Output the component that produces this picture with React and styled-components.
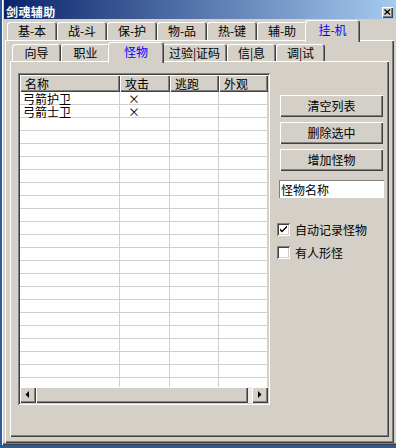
import React from 'react';
import styled, { createGlobalStyle } from 'styled-components';

const FACE = '#d4d0c8';
const raised = `box-shadow: inset 1px 1px #ffffff, inset -1px -1px #404040, inset -2px -2px #808080;`;
const sunken = `box-shadow: inset 1px 1px #808080, inset -1px -1px #ffffff, inset 2px 2px #404040, inset -2px -2px ${FACE};`;

const GlobalStyle = createGlobalStyle`
  html, body { margin: 0; padding: 0; background: #2d5a9c; }
  body { font-family: "Noto Sans CJK SC", "Noto Sans", sans-serif; font-size: 12px; color: #000; }
  * { box-sizing: border-box; }
`;

const Desktop = styled.div`
  width: 396px;
  height: 448px;
  background: #2d5a9c;
  padding-left: 2px;
  overflow: hidden;
`;

const Frame = styled.div`
  height: 445px;
  background: ${FACE};
  padding: 0 0 2px 2px;
  display: flex;
  flex-direction: column;
  box-shadow: inset 1px 0 #ffffff, inset 0 -1px #404040, inset 0 -2px #808080;
`;

const TitleBar = styled.div`
  height: 19px;
  flex: none;
  display: flex;
  align-items: center;
  padding: 5px 3px 0 2px;
  background: linear-gradient(to right, #0a246a, #a6caf0);
`;

const Title = styled.span`
  color: #ffffff;
  font-weight: 700;
  font-size: 12px;
  line-height: 14px;
  letter-spacing: 0.4px;
`;

const CloseButton = styled.div`
  margin-left: auto;
  width: 11px;
  height: 11px;
  background: ${FACE};
  ${raised}
  display: flex;
  align-items: center;
  justify-content: center;
  padding: 0 1px 1px 0;
`;

const TabRow = styled.div`
  flex: none;
  height: ${p => p.$h}px;
  display: flex;
  align-items: flex-end;
  padding-left: ${p => p.$pl}px;
`;

const Tab = styled.div`
  position: relative;
  z-index: ${p => (p.$active ? 1 : 0)};
  width: ${p => p.$w + (p.$active ? 4 : 0)}px;
  height: ${p => (p.$active ? p.$h + 4 : p.$h)}px;
  margin: 0 ${p => (p.$active ? -2 : 0)}px ${p => (p.$active ? -2 : 0)}px;
  padding-bottom: ${p => (p.$active ? 2 : 0)}px;
  background: ${FACE};
  border-radius: 3px 3px 0 0;
  box-shadow: inset 1px 1px #ffffff, inset -1px 0 #404040, inset -2px 0 #808080;
  display: flex;
  align-items: center;
  justify-content: center;
  color: ${p => (p.$active ? '#0000ff' : '#000000')};
  font-size: 12px;
  line-height: 14px;
  white-space: nowrap;
`;

const Panel = styled.div`
  flex: 1;
  background: ${FACE};
  box-shadow: inset 1px 1px #ffffff, inset -1px -1px #404040, inset -2px -2px #808080;
`;

const OuterPanel = styled(Panel)`
  margin: 0 2px 0 1px;
  padding: 2px 5px 6px 5px;
  display: flex;
  flex-direction: column;
`;

const InnerPanel = styled(Panel)`
  display: flex;
  align-items: flex-start;
  padding: 12px 0 0 8px;
`;

const ListView = styled.div`
  width: 252px;
  height: 332px;
  flex: none;
  padding: 2px;
  background: #ffffff;
  ${sunken}
  display: flex;
  flex-direction: column;
`;

const Header = styled.div`
  height: 17px;
  flex: none;
  display: flex;
  background: ${FACE};
  overflow: hidden;
`;

const HeaderCell = styled.div`
  width: ${p => p.$w}px;
  flex: none;
  height: 17px;
  padding-left: 5px;
  ${raised}
  display: flex;
  align-items: center;
  line-height: 14px;
`;

const Body = styled.div`
  flex: 1;
  overflow: hidden;
  background: #ffffff;
`;

const Row = styled.div`
  height: 13px;
  display: flex;
  box-shadow: inset 0 -1px #d0d0d0;
`;

const Cell = styled.div`
  width: ${p => p.$w}px;
  flex: none;
  height: 13px;
  box-shadow: inset -1px 0 #d0d0d0;
  padding-left: ${p => p.$pl}px;
  font-size: 12px;
  line-height: 13px;
  white-space: nowrap;
`;

const ScrollBar = styled.div`
  height: 16px;
  flex: none;
  display: flex;
  background: #eceae6;
`;

const ScrollButton = styled.div`
  width: 16px;
  height: 16px;
  flex: none;
  background: ${FACE};
  ${raised}
  display: flex;
`;

const Thumb = styled.div`
  width: 212px;
  height: 16px;
  flex: none;
  background: ${FACE};
  ${raised}
`;

const Track = styled.div`
  flex: 1;
`;

const SideColumn = styled.div`
  display: flex;
  flex-direction: column;
  align-items: flex-start;
  margin-left: 10px;
  padding-top: 22px;
`;

const Button = styled.div`
  width: 103px;
  height: 22px;
  margin-bottom: ${p => p.$mb}px;
  background: ${FACE};
  ${raised}
  display: flex;
  align-items: center;
  justify-content: center;
  padding-bottom: 1px;
  line-height: 14px;
`;

const TextBox = styled.div`
  width: 105px;
  height: 18px;
  margin-left: -1px;
  background: #ffffff;
  border-top: 1px solid #808080;
  border-left: 1px solid #808080;
  display: flex;
  align-items: center;
  padding-left: 1px;
  line-height: 14px;
`;

const CheckRow = styled.div`
  display: flex;
  align-items: center;
  margin-left: -3px;
  margin-top: ${p => p.$mt}px;
  height: 13px;
`;

const CheckBox = styled.div`
  width: 13px;
  height: 13px;
  flex: none;
  background: #ffffff;
  ${sunken}
  display: flex;
  align-items: center;
  justify-content: center;
`;

const CheckLabel = styled.span`
  margin-left: 5px;
  line-height: 14px;
`;

const outerTabs = [
  { label: '基-本', w: 50 },
  { label: '战-斗', w: 50 },
  { label: '保-护', w: 50 },
  { label: '物-品', w: 50 },
  { label: '热-键', w: 50 },
  { label: '辅-助', w: 50 },
  { label: '挂-机', w: 51, active: true },
];

const innerTabs = [
  { label: '向导', w: 49 },
  { label: '职业', w: 49 },
  { label: '怪物', w: 52, active: true },
  { label: '过验|证码', w: 65 },
  { label: '信|息', w: 49 },
  { label: '调|试', w: 49 },
];

const columns = [
  { label: '名称', w: 100 },
  { label: '攻击', w: 50 },
  { label: '逃跑', w: 49 },
  { label: '外观', w: 49 },
];

const items = [
  ['弓箭护卫', '×', '', ''],
  ['弓箭士卫', '×', '', ''],
];

const rows = [...items, ...Array.from({ length: 21 }, () => ['', '', '', ''])];

const CheckMark = () => (
  <svg width="9" height="9" viewBox="0 0 9 9">
    <path d="M1 3.5 L1 5.5 L3 7.5 L8 2.5 L8 0.5 L3 5.5 Z" fill="#000" />
  </svg>
);

const CloseGlyph = () => (
  <svg width="7" height="6" viewBox="0 0 7 6">
    <path d="M0.5 0.5 L6 5.5 M6 0.5 L0.5 5.5" stroke="#000" strokeWidth="1.3" />
  </svg>
);

const Arrow = ({ dir }) => (
  <svg width="16" height="16" viewBox="0 0 16 16">
    {dir === 'left' ? (
      <polygon points="9,4 9,11 5.5,7.5" fill="#000" />
    ) : (
      <polygon points="6,4 6,11 9.5,7.5" fill="#000" />
    )}
  </svg>
);

export default function App() {
  return (
    <>
      <GlobalStyle />
      <Desktop>
        <Frame>
          <TitleBar>
            <Title>剑魂辅助</Title>
            <CloseButton>
              <CloseGlyph />
            </CloseButton>
          </TitleBar>
          <TabRow $h={21} $pl={3}>
            {outerTabs.map(t => (
              <Tab key={t.label} $w={t.w} $h={18} $active={t.active}>
                {t.label}
              </Tab>
            ))}
          </TabRow>
          <OuterPanel>
            <TabRow $h={19} $pl={2}>
              {innerTabs.map(t => (
                <Tab key={t.label} $w={t.w} $h={17} $active={t.active}>
                  {t.label}
                </Tab>
              ))}
            </TabRow>
            <InnerPanel>
              <ListView>
                <Header>
                  {columns.map(c => (
                    <HeaderCell key={c.label} $w={c.w}>
                      {c.label}
                    </HeaderCell>
                  ))}
                </Header>
                <Body>
                  {rows.map((r, i) => (
                    <Row key={i}>
                      {r.map((v, j) => (
                        <Cell key={j} $w={columns[j].w} $pl={j === 0 ? 3 : 8}>
                          {v}
                        </Cell>
                      ))}
                    </Row>
                  ))}
                </Body>
                <ScrollBar>
                  <ScrollButton>
                    <Arrow dir="left" />
                  </ScrollButton>
                  <Thumb />
                  <Track />
                  <ScrollButton>
                    <Arrow dir="right" />
                  </ScrollButton>
                </ScrollBar>
              </ListView>
              <SideColumn>
                <Button $mb={5}>清空列表</Button>
                <Button $mb={5}>删除选中</Button>
                <Button $mb={9}>增加怪物</Button>
                <TextBox>怪物名称</TextBox>
                <CheckRow $mt={25}>
                  <CheckBox>
                    <CheckMark />
                  </CheckBox>
                  <CheckLabel>自动记录怪物</CheckLabel>
                </CheckRow>
                <CheckRow $mt={10}>
                  <CheckBox />
                  <CheckLabel>有人形怪</CheckLabel>
                </CheckRow>
              </SideColumn>
            </InnerPanel>
          </OuterPanel>
        </Frame>
      </Desktop>
    </>
  );
}
